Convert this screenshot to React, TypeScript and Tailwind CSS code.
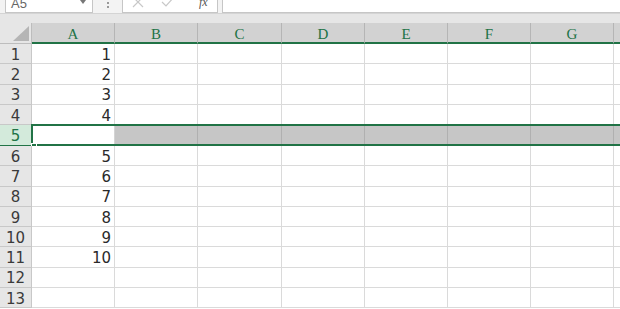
import React from "react";

const cols = ["A", "B", "C", "D", "E", "F", "G", "H"];
const widths = ["w-[83px]", "w-[83px]", "w-[84px]", "w-[83px]", "w-[83px]", "w-[83px]", "w-[83px]", "w-[83px]"];

const rows: { n: number; v: string }[] = [
  { n: 1, v: "1" },
  { n: 2, v: "2" },
  { n: 3, v: "3" },
  { n: 4, v: "4" },
  { n: 5, v: "" },
  { n: 6, v: "5" },
  { n: 7, v: "6" },
  { n: 8, v: "7" },
  { n: 9, v: "8" },
  { n: 10, v: "9" },
  { n: 11, v: "10" },
  { n: 12, v: "" },
  { n: 13, v: "" },
];

const serif = { fontFamily: '"Liberation Serif", "Noto Sans CJK SC", serif' };
const digits = { fontFamily: '"DejaVu Sans", "Noto Sans CJK SC", sans-serif' };

const FormulaBar = () => (
  <div className="flex h-[14px] bg-[#f3f3f3] border-b border-[#d4d4d4]">
    <div className="ml-[5px] w-[88px] h-[13px] bg-white border-x border-b border-[#c6c6c6] flex items-end justify-between px-[5px] overflow-hidden">
      <span className="text-[13px] text-[#666] leading-none translate-y-[-2px]" style={{ fontFamily: '"Liberation Sans", sans-serif' }}>
        A5
      </span>
      <svg width="8" height="6" viewBox="0 0 8 6" className="mb-[6px]">
        <path d="M1 0 L4 4 L7 0 Z" fill="#777" />
      </svg>
    </div>
    <div className="w-[29px] flex justify-center pt-[2px]">
      <div className="flex flex-col gap-[2px]">
        <span className="w-[2px] h-[2px] bg-[#999]" />
        <span className="w-[2px] h-[2px] bg-[#999]" />
      </div>
    </div>
    <div className="w-[96px] h-[13px] bg-white border-x border-b border-[#c6c6c6] flex items-start overflow-hidden relative">
      <svg width="12" height="12" viewBox="0 0 12 12" className="absolute left-[9px] top-[-4px]">
        <path d="M1 1 L11 11 M11 1 L1 11" stroke="#c8c8c8" strokeWidth="1.2" />
      </svg>
      <svg width="14" height="12" viewBox="0 0 14 12" className="absolute left-[38px] top-[-4px]">
        <path d="M1 6 L5 10 L13 1" stroke="#c8c8c8" strokeWidth="1.2" fill="none" />
      </svg>
      <span className="absolute left-[76px] top-[-4px] text-[12px] leading-none italic text-[#555]" style={serif}>
        fx
      </span>
    </div>
    <div className="ml-[4px] flex-1 h-[13px] bg-white border-l border-b border-[#c6c6c6]" />
  </div>
);

const Header = () => (
  <div className="flex h-[21px] bg-[#d2d2d2]" style={serif}>
    <div className="w-[32px] shrink-0 bg-[#e6e6e6] border-r border-b border-[#bdbdbd] relative">
      <svg width="16" height="15" viewBox="0 0 16 15" className="absolute right-[2px] bottom-[2px]">
        <path d="M16 0 L16 15 L0 15 Z" fill="#b5b5b5" />
      </svg>
    </div>
    {cols.map((c, i) => (
      <div
        key={c}
        className={`${widths[i]} shrink-0 border-r border-[#b5b5b5] border-b-2 border-b-[#217346] flex items-center justify-center text-[15px] text-[#217346] pt-[3px]`}
      >
        {c}
      </div>
    ))}
  </div>
);

const Row = ({ n, v }: { n: number; v: string }) => {
  const sel = n === 5;
  return (
    <div className={`flex relative ${sel ? "h-[21px]" : "h-[20.25px]"}`} style={digits}>
      <div
        className={`w-[32px] shrink-0 border-r border-b flex items-center justify-center text-[15px] pt-[3px] ${
          sel ? "bg-[#d3eadb] text-[#217346] border-[#217346]" : "bg-[#e6e6e6] text-[#3a3a3a] border-[#c8c8c8]"
        }`}
      >
        {n}
      </div>
      {cols.map((c, i) => (
        <div
          key={c}
          className={`${widths[i]} shrink-0 border-r border-b flex items-center justify-end pr-[3px] pt-[3px] text-[15px] text-[#2a2a2a] ${
            sel ? (i === 0 ? "bg-white border-[#d4d4d4]" : "bg-[#c6c6c6] border-[#b0b0b0]") : "bg-white border-[#dadada]"
          }`}
        >
          {i === 0 ? v : ""}
        </div>
      ))}
      {sel && (
        <>
          <div className="absolute left-[31px] right-[-4px] top-[-1px] bottom-0 border-2 border-[#217346] pointer-events-none" />
          <div className="absolute left-[31px] bottom-[-3px] w-[6px] h-[6px] bg-[#217346] border border-white" />
        </>
      )}
    </div>
  );
};

export default function App() {
  return (
    <div className="w-[620px] h-[309px] overflow-hidden bg-white">
      <FormulaBar />
      <div className="h-[9px] bg-[#e6e6e6]" />
      <Header />
      {rows.map((r) => (
        <Row key={r.n} n={r.n} v={r.v} />
      ))}
    </div>
  );
}
